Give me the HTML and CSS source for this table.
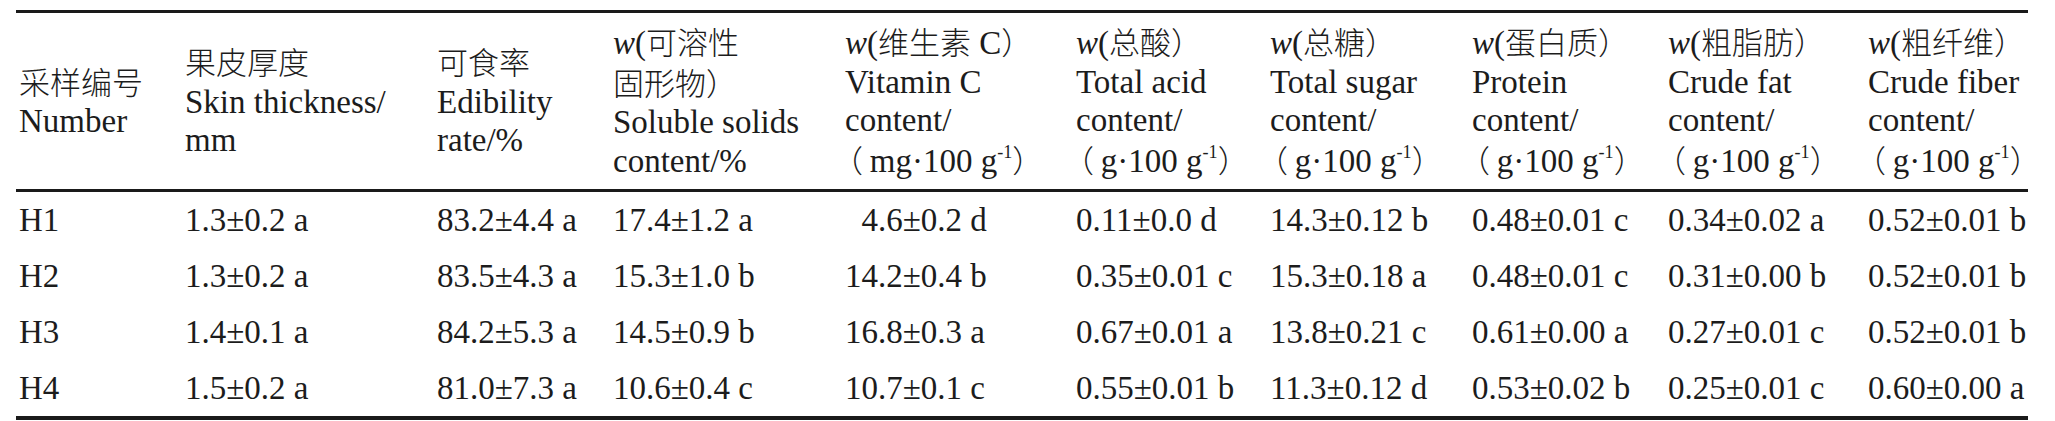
FILE: index.html
```html
<!DOCTYPE html>
<html lang="zh-CN">
<head>
<meta charset="utf-8">
<title>果实品质</title>
<link rel="stylesheet" href="styles.css">
</head>
<body>
<table class="t">
  <colgroup>
    <col class="c1"><col class="c2"><col class="c3"><col class="c4"><col class="c5">
    <col class="c6"><col class="c7"><col class="c8"><col class="c9"><col class="c10">
  </colgroup>
  <thead>
    <tr>
      <th><span class="zh">采样编号</span><br>Number</th>
      <th><span class="zh">果皮厚度</span><br>Skin thickness/<br>mm</th>
      <th><span class="zh">可食率</span><br>Edibility<br>rate/%</th>
      <th><i>w</i>(<span class="zh">可溶性</span><br><span class="zh">固形物）</span><br>Soluble solids<br>content/%</th>
      <th><i>w</i>(<span class="zh">维生素</span> C<span class="zh">）</span><br>Vitamin C<br>content/<br><span class="zh op">（</span>mg·100 g<sup>-1</sup><span class="zh">）</span></th>
      <th><i>w</i>(<span class="zh">总酸）</span><br>Total acid<br>content/<br><span class="zh op">（</span>g·100 g<sup>-1</sup><span class="zh">）</span></th>
      <th><i>w</i>(<span class="zh">总糖）</span><br>Total sugar<br>content/<br><span class="zh op">（</span>g·100 g<sup>-1</sup><span class="zh">）</span></th>
      <th><i>w</i>(<span class="zh">蛋白质）</span><br>Protein<br>content/<br><span class="zh op">（</span>g·100 g<sup>-1</sup><span class="zh">）</span></th>
      <th><i>w</i>(<span class="zh">粗脂肪）</span><br>Crude fat<br>content/<br><span class="zh op">（</span>g·100 g<sup>-1</sup><span class="zh">）</span></th>
      <th><i>w</i>(<span class="zh">粗纤维）</span><br>Crude fiber<br>content/<br><span class="zh op">（</span>g·100 g<sup>-1</sup><span class="zh">）</span></th>
    </tr>
  </thead>
  <tbody>
    <tr>
      <td>H1</td><td>1.3±0.2 a</td><td>83.2±4.4 a</td><td>17.4±1.2 a</td><td class="ind">4.6±0.2 d</td>
      <td>0.11±0.0 d</td><td>14.3±0.12 b</td><td>0.48±0.01 c</td><td>0.34±0.02 a</td><td>0.52±0.01 b</td>
    </tr>
    <tr>
      <td>H2</td><td>1.3±0.2 a</td><td>83.5±4.3 a</td><td>15.3±1.0 b</td><td>14.2±0.4 b</td>
      <td>0.35±0.01 c</td><td>15.3±0.18 a</td><td>0.48±0.01 c</td><td>0.31±0.00 b</td><td>0.52±0.01 b</td>
    </tr>
    <tr>
      <td>H3</td><td>1.4±0.1 a</td><td>84.2±5.3 a</td><td>14.5±0.9 b</td><td>16.8±0.3 a</td>
      <td>0.67±0.01 a</td><td>13.8±0.21 c</td><td>0.61±0.00 a</td><td>0.27±0.01 c</td><td>0.52±0.01 b</td>
    </tr>
    <tr>
      <td>H4</td><td>1.5±0.2 a</td><td>81.0±7.3 a</td><td>10.6±0.4 c</td><td>10.7±0.1 c</td>
      <td>0.55±0.01 b</td><td>11.3±0.12 d</td><td>0.53±0.02 b</td><td>0.25±0.01 c</td><td>0.60±0.00 a</td>
    </tr>
  </tbody>
</table>
</body>
</html>
```

FILE: styles.css
```css
html, body {
  margin: 0;
  padding: 0;
  background: #ffffff;
}

.t {
  margin: 10px 0 0 16px;
  width: 2012px;
  table-layout: fixed;
  border-collapse: separate;
  border-spacing: 0;
  border-top: 3px solid #1a1a1a;
  border-bottom: 4px solid #1a1a1a;
  font-family: "Liberation Serif", "Noto Sans CJK SC", serif;
  font-size: 33px;
  color: #1c1c1c;
}

.c1 { width: 166px; }
.c2 { width: 252px; }
.c3 { width: 176px; }
.c4 { width: 232px; }
.c5 { width: 231px; }
.c6 { width: 194px; }
.c7 { width: 202px; }
.c8 { width: 196px; }
.c9 { width: 200px; }
.c10 { width: 163px; }

.t th {
  font-weight: normal;
  text-align: left;
  vertical-align: middle;
  white-space: nowrap;
  line-height: 38.5px;
  padding: 9px 0 9px 3px;
  border-bottom: 3px solid #1a1a1a;
}

.t td {
  height: 56px;
  padding: 0 0 0 3px;
  line-height: 56px;
  white-space: nowrap;
  vertical-align: middle;
}

.t td.ind {
  text-indent: 0.5em;
}

.zh {
  font-family: "Noto Sans CJK SC", sans-serif;
  font-weight: 300;
  font-size: 31px;
}

.zh.op {
  margin-left: -0.42em;
  margin-right: 0.22em;
}

.t i {
  font-style: italic;
}

.t sup {
  font-size: 0.55em;
  line-height: 0;
  vertical-align: 0.75em;
}
```
